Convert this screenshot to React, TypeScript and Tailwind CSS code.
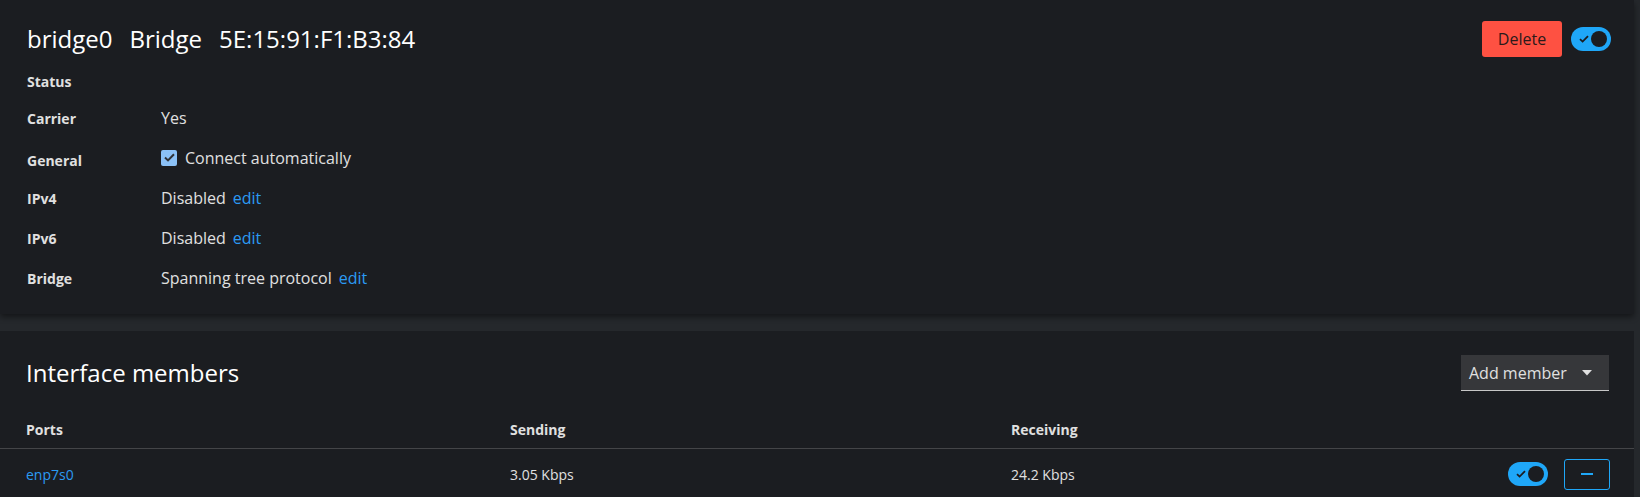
import React from 'react';

const font = { fontFamily: '"Open Sans", "Liberation Sans", sans-serif' };

const Toggle = () => (
    <span className="relative inline-flex h-[24px] w-[40px] items-center rounded-full bg-[#1fa7f8]">
        <svg className="absolute left-[8px] top-[8px]" width="10" height="8" viewBox="0 0 10 8">
            <path d="M1 4.2 L3.6 6.6 L9 1.2" fill="none" stroke="#1b1d21" strokeWidth="1.8" />
        </svg>
        <span className="absolute right-[4px] top-[4px] h-[16px] w-[16px] rounded-full bg-[#1b1d21]" />
    </span>
);

const Row = ({ label, className, children }: { label: string; className: string; children?: React.ReactNode }) => (
    <div className={'flex items-center h-[24px] ' + className}>
        <div className="w-[134px] text-[14px] font-bold text-[#e0e0e0]">{label}</div>
        <div className="flex items-center text-[16px] text-[#e0e0e0]">{children}</div>
    </div>
);

const Edit = () => <a className="ml-[7px] text-[#2b9af3] cursor-pointer">edit</a>;

export default function App() {
    return (
        <div className="w-[1640px] h-[497px] overflow-hidden bg-[#25282c]" style={font}>
            {/* details card */}
            <div className="mr-[6px] h-[314px] bg-[#1b1d21] pl-[27px] pr-[23px] pt-[21px] shadow-[0_3px_6px_rgba(0,0,0,0.45)]">
                <div className="flex items-center justify-between h-[36px]">
                    <h1 className="flex gap-[17px] text-[24px] text-white leading-none">
                        <span>bridge0</span>
                        <span>Bridge</span>
                        <span>5E:15:91:F1:B3:84</span>
                    </h1>
                    <div className="flex items-center gap-[9px]">
                        <button className="h-[36px] w-[80px] rounded-[3px] bg-[#fe5142] text-[16px] text-[#2a1a1a]">Delete</button>
                        <Toggle />
                    </div>
                </div>
                <Row label="Status" className="mt-[12px]" />
                <Row label="Carrier" className="mt-[13px]">Yes</Row>
                <Row label="General" className="mt-[18px]">
                    <span className="-mt-[5px] flex items-center">
                        <span className="flex h-[16px] w-[16px] items-center justify-center rounded-[2px] bg-[#8bc1f7]">
                            <svg width="11" height="9" viewBox="0 0 11 9">
                                <path d="M1 4.6 L4 7.4 L10 1.2" fill="none" stroke="#2f3237" strokeWidth="2" />
                            </svg>
                        </span>
                        <span className="ml-[8px]">Connect automatically</span>
                    </span>
                </Row>
                <Row label="IPv4" className="mt-[14px]">Disabled<Edit /></Row>
                <Row label="IPv6" className="mt-[16px]">Disabled<Edit /></Row>
                <Row label="Bridge" className="mt-[16px]">Spanning tree protocol<Edit /></Row>
            </div>

            {/* members card */}
            <div className="mr-[6px] mt-[17px] h-[200px] bg-[#1b1d21] pt-[24px]">
                <div className="flex items-center justify-between h-[36px] pl-[26px] pr-[25px]">
                    <h2 className="text-[24px] text-white leading-none">Interface members</h2>
                    <div className="flex h-[36px] w-[148px] items-center justify-between border-b border-[#c7c7c7] bg-[#36373a] pl-[8px] pr-[17px] text-[16px] text-[#e0e0e0]">
                        <span>Add member</span>
                        <svg width="10" height="6" viewBox="0 0 10 6">
                            <path d="M0 0 L10 0 L5 5.5 Z" fill="#e0e0e0" />
                        </svg>
                    </div>
                </div>
                <div className="mt-[20px] flex h-[38px] items-center border-b border-[#444548] text-[14px] font-bold text-[#e0e0e0]">
                    <div className="w-[510px] pl-[26px]">Ports</div>
                    <div className="w-[501px]">Sending</div>
                    <div>Receiving</div>
                </div>
                <div className="flex h-[50px] items-center text-[14px] text-[#e0e0e0]">
                    <div className="w-[510px] pl-[26px] text-[#2b9af3]">enp7s0</div>
                    <div className="w-[501px]">3.05 Kbps</div>
                    <div className="flex-1">24.2 Kbps</div>
                    <div className="flex items-center gap-[16px] pr-[24px]">
                        <Toggle />
                        <button className="flex h-[31px] w-[46px] items-center justify-center rounded-[3px] border border-[#1fa7f8]">
                            <span className="h-[2px] w-[12px] bg-[#1fa7f8]" />
                        </button>
                    </div>
                </div>
            </div>
        </div>
    );
}
